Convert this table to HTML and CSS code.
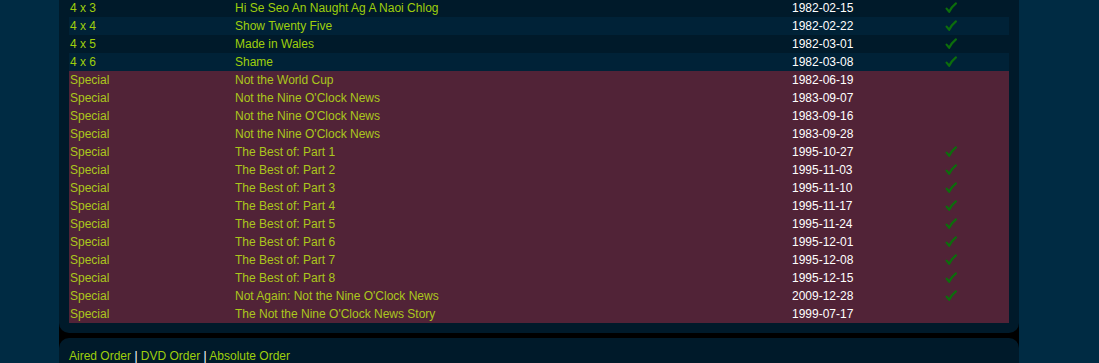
FILE: index.html
```html
<!DOCTYPE html>
<html>
<head>
<meta charset="utf-8">
<link rel="stylesheet" href="styles.css">
</head>
<body>
<div class="wrap">
  <div class="panel main">
    <div class="list">
      <div class="row"><span>4 x 3</span><span>Hi Se Seo An Naught Ag A Naoi Chlog</span><span class="date">1982-02-15</span><span class="chk"><svg viewBox="0 0 12 12"><path d="M1.6 6.6 L4.2 9.8 Q6.5 5 10.9 1.4" /></svg></span></div>
      <div class="row alt"><span>4 x 4</span><span>Show Twenty Five</span><span class="date">1982-02-22</span><span class="chk"><svg viewBox="0 0 12 12"><path d="M1.6 6.6 L4.2 9.8 Q6.5 5 10.9 1.4" /></svg></span></div>
      <div class="row"><span>4 x 5</span><span>Made in Wales</span><span class="date">1982-03-01</span><span class="chk"><svg viewBox="0 0 12 12"><path d="M1.6 6.6 L4.2 9.8 Q6.5 5 10.9 1.4" /></svg></span></div>
      <div class="row alt"><span>4 x 6</span><span>Shame</span><span class="date">1982-03-08</span><span class="chk"><svg viewBox="0 0 12 12"><path d="M1.6 6.6 L4.2 9.8 Q6.5 5 10.9 1.4" /></svg></span></div>
      <div class="row special"><span>Special</span><span>Not the World Cup</span><span class="date">1982-06-19</span><span class="chk"></span></div>
      <div class="row special"><span>Special</span><span>Not the Nine O'Clock News</span><span class="date">1983-09-07</span><span class="chk"></span></div>
      <div class="row special"><span>Special</span><span>Not the Nine O'Clock News</span><span class="date">1983-09-16</span><span class="chk"></span></div>
      <div class="row special"><span>Special</span><span>Not the Nine O'Clock News</span><span class="date">1983-09-28</span><span class="chk"></span></div>
      <div class="row special"><span>Special</span><span>The Best of: Part 1</span><span class="date">1995-10-27</span><span class="chk"><svg viewBox="0 0 12 12"><path d="M1.6 6.6 L4.2 9.8 Q6.5 5 10.9 1.4" /></svg></span></div>
      <div class="row special"><span>Special</span><span>The Best of: Part 2</span><span class="date">1995-11-03</span><span class="chk"><svg viewBox="0 0 12 12"><path d="M1.6 6.6 L4.2 9.8 Q6.5 5 10.9 1.4" /></svg></span></div>
      <div class="row special"><span>Special</span><span>The Best of: Part 3</span><span class="date">1995-11-10</span><span class="chk"><svg viewBox="0 0 12 12"><path d="M1.6 6.6 L4.2 9.8 Q6.5 5 10.9 1.4" /></svg></span></div>
      <div class="row special"><span>Special</span><span>The Best of: Part 4</span><span class="date">1995-11-17</span><span class="chk"><svg viewBox="0 0 12 12"><path d="M1.6 6.6 L4.2 9.8 Q6.5 5 10.9 1.4" /></svg></span></div>
      <div class="row special"><span>Special</span><span>The Best of: Part 5</span><span class="date">1995-11-24</span><span class="chk"><svg viewBox="0 0 12 12"><path d="M1.6 6.6 L4.2 9.8 Q6.5 5 10.9 1.4" /></svg></span></div>
      <div class="row special"><span>Special</span><span>The Best of: Part 6</span><span class="date">1995-12-01</span><span class="chk"><svg viewBox="0 0 12 12"><path d="M1.6 6.6 L4.2 9.8 Q6.5 5 10.9 1.4" /></svg></span></div>
      <div class="row special"><span>Special</span><span>The Best of: Part 7</span><span class="date">1995-12-08</span><span class="chk"><svg viewBox="0 0 12 12"><path d="M1.6 6.6 L4.2 9.8 Q6.5 5 10.9 1.4" /></svg></span></div>
      <div class="row special"><span>Special</span><span>The Best of: Part 8</span><span class="date">1995-12-15</span><span class="chk"><svg viewBox="0 0 12 12"><path d="M1.6 6.6 L4.2 9.8 Q6.5 5 10.9 1.4" /></svg></span></div>
      <div class="row special"><span>Special</span><span>Not Again: Not the Nine O'Clock News</span><span class="date">2009-12-28</span><span class="chk"><svg viewBox="0 0 12 12"><path d="M1.6 6.6 L4.2 9.8 Q6.5 5 10.9 1.4" /></svg></span></div>
      <div class="row special"><span>Special</span><span>The Not the Nine O'Clock News Story</span><span class="date">1999-07-17</span><span class="chk"></span></div>
    </div>
  </div>
  <div class="panel foot">
    <a href="#">Aired Order</a> <span class="sep">|</span> <a href="#">DVD Order</a> <span class="sep">|</span> <a href="#">Absolute Order</a>
  </div>
</div>
</body>
</html>
```

FILE: styles.css
```css
html, body {
  margin: 0;
  padding: 0;
  height: 363px;
  background: #002b43;
  font-family: "Liberation Sans", Arial, sans-serif;
  font-size: 12px;
  color: #9fcf0c;
  overflow: hidden;
}
.wrap {
  margin-left: 59px;
  width: 960px;
  margin-top: -1px;
  background: #000000;
  display: flex;
  flex-direction: column;
  gap: 5px;
  height: 364px;
}
.panel {
  background: #001a2a;
}
.main {
  border-radius: 0 0 10px 10px;
  padding: 0 10px 10px;
}
.row {
  display: grid;
  grid-template-columns: 165px 557px 150px 1fr;
  height: 18px;
  line-height: 18px;
  padding-left: 1px;
  white-space: nowrap;
}
.row.alt {
  background: #002237;
}
.row.special {
  background: #512337;
  color: #abc71c;
}
.date {
  color: #ffffff;
}
.chk {
  display: flex;
  align-items: center;
  padding-left: 3px;
}
.chk svg {
  width: 12px;
  height: 12px;
  fill: none;
  stroke: #0c6e0c;
  stroke-width: 2.2;
  stroke-linecap: round;
  stroke-linejoin: round;
}
.foot {
  border-radius: 10px 10px 0 0;
  padding: 11px 10px 0;
  flex: 1;
  color: #ffffff;
}
.foot a {
  color: #9fcf0c;
  text-decoration: none;
}
```
